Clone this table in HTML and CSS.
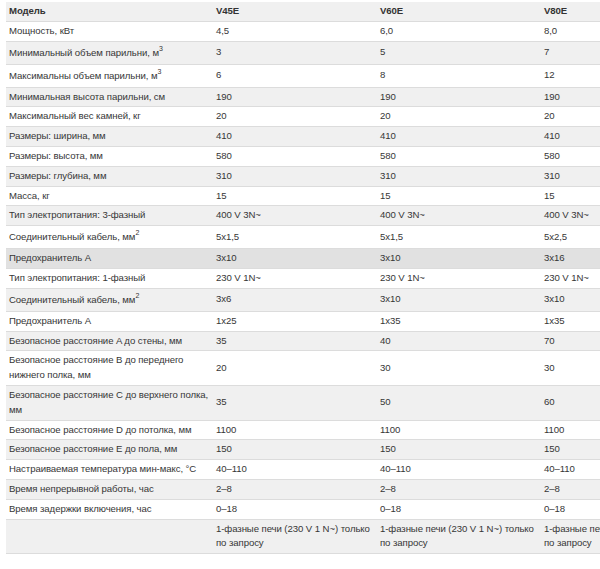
FILE: index.html
```html
<!DOCTYPE html>
<html lang="ru">
<head>
<meta charset="utf-8">
<title>Технические характеристики</title>
<link rel="stylesheet" href="styles.css">
</head>
<body>
<div class="wrap">
<table class="specs">
<colgroup>
<col class="c-name"><col class="c-val"><col class="c-val"><col class="c-val">
</colgroup>
<thead>
<tr><th>Модель</th><th>V45E</th><th>V60E</th><th>V80E</th></tr>
</thead>
<tbody>
<tr><td>Мощность, кВт</td><td>4,5</td><td>6,0</td><td>8,0</td></tr>
<tr class="sup-row"><td>Минимальный объем парильни, м<sup>3</sup></td><td>3</td><td>5</td><td>7</td></tr>
<tr class="sup-row"><td>Максимальны объем парильни, м<sup>3</sup></td><td>6</td><td>8</td><td>12</td></tr>
<tr><td>Минимальная высота парильни, см</td><td>190</td><td>190</td><td>190</td></tr>
<tr><td>Максимальный вес камней, кг</td><td>20</td><td>20</td><td>20</td></tr>
<tr><td>Размеры: ширина, мм</td><td>410</td><td>410</td><td>410</td></tr>
<tr><td>Размеры: высота, мм</td><td>580</td><td>580</td><td>580</td></tr>
<tr><td>Размеры: глубина, мм</td><td>310</td><td>310</td><td>310</td></tr>
<tr><td>Масса, кг</td><td>15</td><td>15</td><td>15</td></tr>
<tr><td>Тип электропитания: 3-фазный</td><td>400 V 3N~</td><td>400 V 3N~</td><td>400 V 3N~</td></tr>
<tr class="sup-row"><td>Соединительный кабель, мм<sup>2</sup></td><td>5x1,5</td><td>5x1,5</td><td>5x2,5</td></tr>
<tr class="is-active"><td>Предохранитель А</td><td>3x10</td><td>3x10</td><td>3x16</td></tr>
<tr><td>Тип электропитания: 1-фазный</td><td>230 V 1N~</td><td>230 V 1N~</td><td>230 V 1N~</td></tr>
<tr class="sup-row"><td>Соединительный кабель, мм<sup>2</sup></td><td>3x6</td><td>3x10</td><td>3x10</td></tr>
<tr><td>Предохранитель А</td><td>1x25</td><td>1x35</td><td>1x35</td></tr>
<tr><td>Безопасное расстояние A до стены, мм</td><td>35</td><td>40</td><td>70</td></tr>
<tr><td>Безопасное расстояние B до переднего нижнего полка, мм</td><td>20</td><td>30</td><td>30</td></tr>
<tr><td>Безопасное расстояние C до верхнего полка, мм</td><td>35</td><td>50</td><td>60</td></tr>
<tr><td>Безопасное расстояние D до потолка, мм</td><td>1100</td><td>1100</td><td>1100</td></tr>
<tr><td>Безопасное расстояние E до пола, мм</td><td>150</td><td>150</td><td>150</td></tr>
<tr><td>Настраиваемая температура мин-макс, °C</td><td>40–110</td><td>40–110</td><td>40–110</td></tr>
<tr><td>Время непрерывной работы, час</td><td>2–8</td><td>2–8</td><td>2–8</td></tr>
<tr><td>Время задержки включения, час</td><td>0–18</td><td>0–18</td><td>0–18</td></tr>
<tr><td></td><td>1-фазные печи (230 V 1 N~) только по запросу</td><td>1-фазные печи (230 V 1 N~) только по запросу</td><td>1-фазные печи (230 V 1 N~) только по запросу</td></tr>
</tbody>
</table>
</div>
</body>
</html>
```

FILE: styles.css
```css
html, body {
  margin: 0;
  padding: 0;
  background: #ffffff;
}

body {
  width: 600px;
  height: 569px;
  overflow: hidden;
}

.wrap {
  padding: 2px 0 0 6px;
  overflow: hidden;
}

.specs {
  border-collapse: collapse;
  table-layout: fixed;
  width: 699px;
  font-family: "Liberation Sans", Arial, sans-serif;
  font-size: 9.6px;
  line-height: 14.8px;
  letter-spacing: -0.08px;
  color: #363636;
}

.c-name { width: 207px; }
.c-val { width: 164px; }

.specs th,
.specs td {
  padding: 2px 1px 2px 3px;
  text-align: left;
  vertical-align: middle;
  border-bottom: 1px solid #dcdcdc;
}

.specs th {
  font-weight: bold;
  background: #f0f0f0;
  color: #333333;
}

.specs tbody tr:nth-child(even) {
  background: #f0f0f0;
}

.specs tbody tr.is-active {
  background: #e1e1e1;
}

.specs sup {
  font-size: 7px;
  line-height: 1;
  vertical-align: 5px;
}

.specs .sup-row td {
  height: 18px;
}
```
